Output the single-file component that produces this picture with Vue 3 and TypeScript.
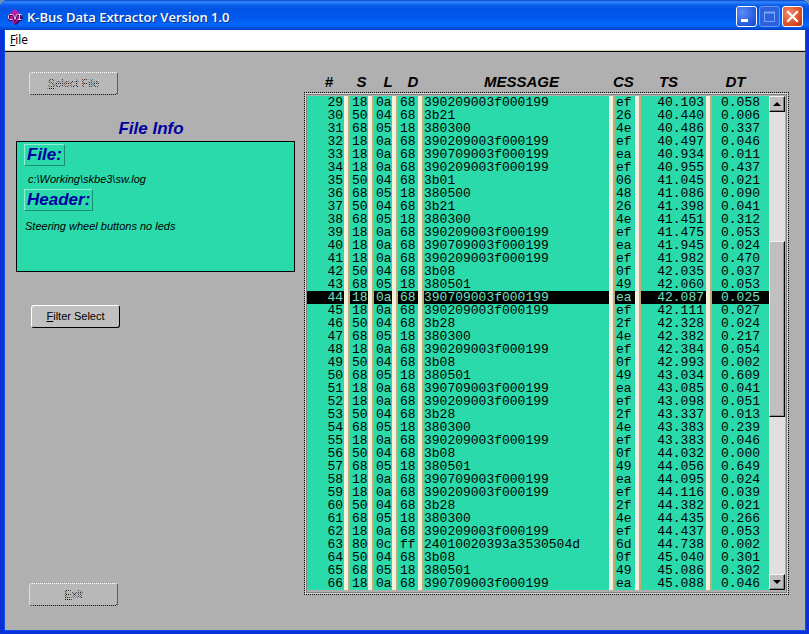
<script setup lang="ts">
import { ref } from 'vue'

type Row = [number, string, string, string, string, string, string, string]

const rows: Row[] = [
  [29, '18', '0a', '68', '390209003f000199', 'ef', '40.103', '0.058'],
  [30, '50', '04', '68', '3b21', '26', '40.440', '0.006'],
  [31, '68', '05', '18', '380300', '4e', '40.486', '0.337'],
  [32, '18', '0a', '68', '390209003f000199', 'ef', '40.497', '0.046'],
  [33, '18', '0a', '68', '390709003f000199', 'ea', '40.934', '0.011'],
  [34, '18', '0a', '68', '390209003f000199', 'ef', '40.955', '0.437'],
  [35, '50', '04', '68', '3b01', '06', '41.045', '0.021'],
  [36, '68', '05', '18', '380500', '48', '41.086', '0.090'],
  [37, '50', '04', '68', '3b21', '26', '41.398', '0.041'],
  [38, '68', '05', '18', '380300', '4e', '41.451', '0.312'],
  [39, '18', '0a', '68', '390209003f000199', 'ef', '41.475', '0.053'],
  [40, '18', '0a', '68', '390709003f000199', 'ea', '41.945', '0.024'],
  [41, '18', '0a', '68', '390209003f000199', 'ef', '41.982', '0.470'],
  [42, '50', '04', '68', '3b08', '0f', '42.035', '0.037'],
  [43, '68', '05', '18', '380501', '49', '42.060', '0.053'],
  [44, '18', '0a', '68', '390709003f000199', 'ea', '42.087', '0.025'],
  [45, '18', '0a', '68', '390209003f000199', 'ef', '42.111', '0.027'],
  [46, '50', '04', '68', '3b28', '2f', '42.328', '0.024'],
  [47, '68', '05', '18', '380300', '4e', '42.382', '0.217'],
  [48, '18', '0a', '68', '390209003f000199', 'ef', '42.384', '0.054'],
  [49, '50', '04', '68', '3b08', '0f', '42.993', '0.002'],
  [50, '68', '05', '18', '380501', '49', '43.034', '0.609'],
  [51, '18', '0a', '68', '390709003f000199', 'ea', '43.085', '0.041'],
  [52, '18', '0a', '68', '390209003f000199', 'ef', '43.098', '0.051'],
  [53, '50', '04', '68', '3b28', '2f', '43.337', '0.013'],
  [54, '68', '05', '18', '380300', '4e', '43.383', '0.239'],
  [55, '18', '0a', '68', '390209003f000199', 'ef', '43.383', '0.046'],
  [56, '50', '04', '68', '3b08', '0f', '44.032', '0.000'],
  [57, '68', '05', '18', '380501', '49', '44.056', '0.649'],
  [58, '18', '0a', '68', '390709003f000199', 'ea', '44.095', '0.024'],
  [59, '18', '0a', '68', '390209003f000199', 'ef', '44.116', '0.039'],
  [60, '50', '04', '68', '3b28', '2f', '44.382', '0.021'],
  [61, '68', '05', '18', '380300', '4e', '44.435', '0.266'],
  [62, '18', '0a', '68', '390209003f000199', 'ef', '44.437', '0.053'],
  [63, '80', '0c', 'ff', '24010020393a3530504d', '6d', '44.738', '0.002'],
  [64, '50', '04', '68', '3b08', '0f', '45.040', '0.301'],
  [65, '68', '05', '18', '380501', '49', '45.086', '0.302'],
  [66, '18', '0a', '68', '390709003f000199', 'ea', '45.088', '0.046'],
]

const columns = [
  { label: '#', key: 'num' },
  { label: 'S', key: 'src' },
  { label: 'L', key: 'len' },
  { label: 'D', key: 'dst' },
  { label: 'MESSAGE', key: 'msg' },
  { label: 'CS', key: 'cs' },
  { label: 'TS', key: 'ts' },
  { label: 'DT', key: 'dt' },
]

const selected = ref(44)
const thumb = { start: 28, size: 38 }
</script>

<template>
  <div class="window">
    <header class="titlebar">
      <svg class="logo" viewBox="0 0 16 16" aria-hidden="true">
        <path d="M8 0 15 7 9 15 7 15 0 8Z" fill="#b0149f" />
        <path d="M15 7 16 9 9 16 7 15 9 14Z" fill="#3a0648" />
        <path d="M8 0 0 8 2 10 8 4 13 8 15 7Z" fill="#c01fae" />
        <path
          d="M5 6H3L2 7V10L3 11H5M6 6 8 11 10 6M11 6H14M13 6V11M11 11H15"
          fill="none"
          stroke="#3a0648"
          stroke-width="2"
        />
        <path
          d="M5.5 5.5H2.5L1.5 6.5V9.5L2.5 10.5H5.5M6.5 5.5 8 10.5 9.5 5.5M10.5 5.5H14.5M12.5 5.5V10.5M10.5 10.5H14.5"
          fill="none"
          stroke="#f2c4ea"
          stroke-width="1"
        />
      </svg>
      <h1>K-Bus Data Extractor Version 1.0</h1>
      <div class="captions">
        <button type="button" class="cap" aria-label="Minimize">
          <svg viewBox="0 0 19 19"><rect x="4" y="12" width="7" height="3" fill="#fff" /></svg>
        </button>
        <button type="button" class="cap off" aria-label="Maximize" disabled>
          <svg viewBox="0 0 19 19">
            <path d="M4.500 5.500H14.500V14.500H4.500Z" fill="none" stroke="#7da3f5" stroke-width="1" />
            <path d="M4 5.500H15" stroke="#7da3f5" stroke-width="2" />
          </svg>
        </button>
        <button type="button" class="cap close" aria-label="Close">
          <svg viewBox="0 0 19 19">
            <path d="M5 5 14 14M14 5 5 14" stroke="#fff" stroke-width="2.200" stroke-linecap="square" />
          </svg>
        </button>
      </div>
    </header>

    <nav class="menubar">
      <button type="button"><u>F</u>ile</button>
    </nav>

    <main class="client">
      <section class="side">
        <button type="button" class="push dim"><u>S</u>elect File</button>
        <h2>File Info</h2>
        <div class="info">
          <h3>File:</h3>
          <p class="path">c:\Working\skbe3\sw.log</p>
          <h3>Header:</h3>
          <p class="note">Steering wheel buttons no leds</p>
        </div>
        <button type="button" class="push filter"><u>F</u>ilter Select</button>
        <button type="button" class="push dim exit"><u>E</u>xit</button>
      </section>

      <section class="log">
        <table>
          <colgroup>
            <col v-for="c in columns" :key="c.key" :class="'w-' + c.key" />
          </colgroup>
          <thead>
            <tr>
              <th v-for="c in columns" :key="c.key" :class="c.key" scope="col">{{ c.label }}</th>
            </tr>
          </thead>
          <tbody>
            <tr
              v-for="r in rows"
              :key="r[0]"
              :class="{ selected: r[0] === selected }"
              @click="selected = r[0]"
            >
              <td v-for="(c, i) in columns" :key="c.key" :class="c.key">{{ r[i] }}</td>
            </tr>
          </tbody>
        </table>
        <div class="scroll">
          <button type="button" aria-label="Scroll up">
            <svg viewBox="0 0 8 4"><path d="M0 4 4 0 8 4Z" /></svg>
          </button>
          <div class="track">
            <div :style="{ height: thumb.start + '%' }"></div>
            <div class="thumb" :style="{ height: thumb.size + '%' }"></div>
          </div>
          <button type="button" aria-label="Scroll down">
            <svg viewBox="0 0 8 4"><path d="M0 0 4 4 8 0Z" /></svg>
          </button>
        </div>
      </section>
    </main>
  </div>
</template>

<style>
body {
  background: #6f8fb8;
}
</style>

<style scoped>
* {
  box-sizing: border-box;
}
.window {
  min-height: 100vh;
  display: flex;
  flex-direction: column;
  border: solid #0831d9;
  border-width: 0 3px 3px 4px;
  border-radius: 8px 8px 0 0;
  padding: 0 1px 1px;
  background: linear-gradient(#0a50ee, #0a50ee);
  font-family: 'Liberation Sans', Arial, sans-serif;
  color: #000;
}
button {
  font: inherit;
  color: inherit;
}
h1,
h2,
h3,
p {
  margin: 0;
}

.titlebar {
  height: 30px;
  margin: 0 -4px 0 -5px;
  padding: 3px 6px 0 7px;
  display: flex;
  align-items: center;
  border-radius: 8px 8px 0 0;
  background: linear-gradient(
    #0a45c4 0,
    #2f86ff 2px,
    #0c5fee 5px,
    #0054e3 9px,
    #0058ee 18px,
    #0468ff 25px,
    #0459ea 27px,
    #003fc4 30px
  );
}
.logo {
  width: 16px;
  height: 16px;
}
h1 {
  flex: 1;
  margin-left: 4px;
  font: 600 13px/18px 'Open Sans', 'Noto Sans', sans-serif;
  color: #fff;
  text-shadow: 1px 1px #0a2f8c;
}
.captions {
  display: flex;
  gap: 2px;
}
.cap {
  width: 21px;
  height: 21px;
  padding: 0;
  border: 1px solid #fff;
  border-radius: 3px;
  background: radial-gradient(circle at 30% 30%, #5a8df5, #2258dd 70%, #1a49c8);
}
.cap svg {
  display: block;
  width: 19px;
  height: 19px;
}
.cap.off {
  border-color: #6a94f0;
  background: #2a62e0;
}
.cap.close {
  background: radial-gradient(circle at 30% 30%, #ef8a6a, #dc4a22 65%, #b8320e);
}

.menubar {
  height: 22px;
  padding: 0 4px;
  background: #fff;
  border-bottom: 1px solid #000;
  box-shadow: inset 0 -1px #d8d4a8;
}
.menubar button {
  display: block;
  padding: 0 1px;
  border: 0;
  background: none;
  font: 12px/20px 'DejaVu Sans Condensed', sans-serif;
}

.client {
  flex: 1;
  display: flex;
  padding: 20px 16px 24px 11px;
  gap: 9px;
  background: #b0b0b0;
}

.side {
  width: 279px;
  display: flex;
  flex-direction: column;
  align-items: flex-start;
}
.push {
  position: relative;
  width: 89px;
  height: 23px;
  margin-left: 13px;
  padding: 0;
  border: 1px solid;
  border-color: #fff #000 #000 #fff;
  border-radius: 3px;
  background: #c0c0c0;
  font-size: 11px;
  line-height: 21px;
}
.push.dim {
  border-style: dotted;
  background: #b8b8b8;
  color: #101010;
}
/* one-pixel checker that greys out the caption */
.push.dim::after {
  content: '';
  position: absolute;
  inset: 0;
  background: repeating-conic-gradient(#b8b8b8 0 25%, transparent 0 50%) 0 0 / 2px 2px;
}
.push.filter {
  margin: 33px 0 0 15px;
}
.push.exit {
  margin-top: auto;
}
h2 {
  margin-top: 24px;
  padding-right: 9px;
  align-self: center;
  font: italic bold 17px/20px 'Liberation Sans', Arial, sans-serif;
  color: #0000a0;
}
.info {
  width: 100%;
  height: 131px;
  margin-top: 2px;
  padding: 2px 7px;
  border: 1px solid #000;
  background: #2bdaab;
  font: italic 11px/18px 'Liberation Sans', Arial, sans-serif;
}
h3 {
  width: fit-content;
  padding: 0 2px;
  border: 1px solid;
  border-color: #8ff0d5 #1a8f72 #1a8f72 #8ff0d5;
  font: italic bold 17px/20px 'Liberation Sans', Arial, sans-serif;
  color: #0000a0;
}
.info p {
  white-space: nowrap;
}
.info .path {
  padding: 4px 0 1px 4px;
}
.info .note {
  padding: 6px 0 0 1px;
}

.log {
  position: relative;
  flex: 1;
  display: flex;
  align-items: flex-start;
  padding: 0 4px 0 3px;
}
/* focus frame around the list, below the column headings */
.log::before {
  content: '';
  position: absolute;
  top: 20px;
  left: 0;
  right: 0;
  height: 501px;
  border: 1px dotted #000;
  box-shadow:
    inset 0 0 0 1px #d8d8d8,
    inset 0 0 0 2px #808080;
  pointer-events: none;
}
table {
  flex: 1;
  table-layout: fixed;
  width: 100%;
  border-collapse: separate;
  border-spacing: 0;
}
.w-num {
  width: 41px;
}
.w-src,
.w-len {
  width: 24px;
}
.w-dst,
.w-cs {
  width: 26px;
}
.w-ts {
  width: 71px;
}
.w-dt {
  width: 59px;
}
th {
  height: 24px;
  padding: 0 0 4px;
  overflow: visible;
  white-space: nowrap;
  vertical-align: middle;
  font: italic bold 15px/20px 'Liberation Sans', Arial, sans-serif;
}
th.num,
th.src {
  padding-left: 3px;
}
th.len,
th.dst,
th.msg {
  padding-left: 8px;
}
th.cs {
  padding-right: 6px;
}
th.ts {
  padding-right: 12px;
}
th.dt {
  padding-right: 8px;
}
td {
  height: 13px;
  padding: 0;
  border: solid;
  border-width: 0 4px 0 2px;
  border-color: #bcae70 #f4f0e0 #bcae70 #bcae70;
  background: #2bdaab;
  background-clip: padding-box;
  font: 13px/13px 'Liberation Mono', monospace;
  white-space: nowrap;
}
td.num {
  padding-right: 1px;
  border-left: 0;
  text-align: right;
}
td.src,
td.len,
td.dst {
  padding-left: 2px;
}
td.cs {
  padding-left: 1px;
}
td.ts {
  padding-right: 2px;
  text-align: right;
}
td.dt {
  padding-right: 9px;
  border-right: 0;
  text-align: right;
}
.selected td {
  background-color: #000;
  color: #6fe0c0;
}

.scroll {
  width: 16px;
  height: 494px;
  margin-top: 24px;
  display: flex;
  flex-direction: column;
  background: #e0e0e0;
}
.scroll button {
  width: 16px;
  height: 16px;
  padding: 0;
  display: flex;
  align-items: center;
  justify-content: center;
  border: 1px solid;
  border-color: #f4f4f4 #000 #000 #f4f4f4;
  background: #c0c0c0;
  box-shadow: inset -1px -1px #808080;
}
.scroll svg {
  width: 8px;
  height: 4px;
  flex: none;
}
.track {
  flex: 1;
}
.thumb {
  border: 1px solid;
  border-color: #f4f4f4 #000 #000 #f4f4f4;
  background: #c0c0c0;
  box-shadow: inset -1px -1px #909090;
}
</style>
